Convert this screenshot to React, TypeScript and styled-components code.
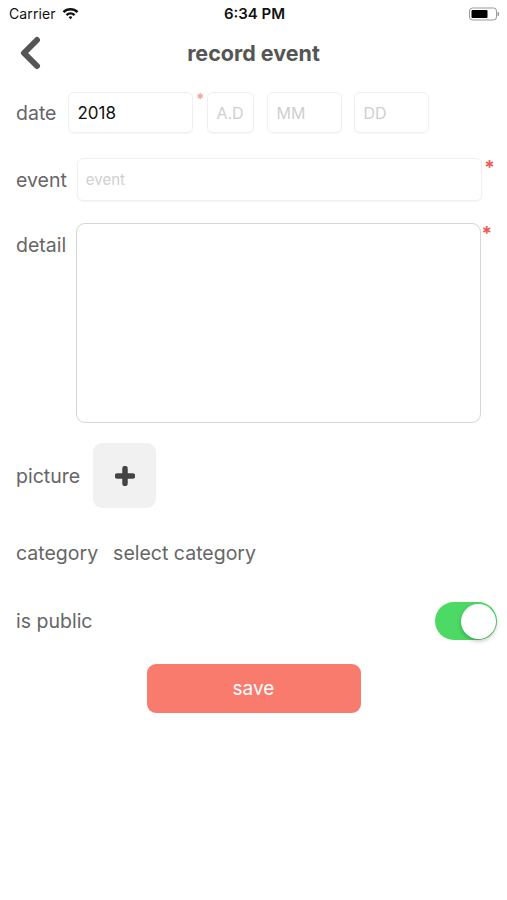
import React from "react";
import styled, { createGlobalStyle } from "styled-components";

const Global = createGlobalStyle`
  html, body { margin: 0; padding: 0; background: #fff; }
  body { font-family: Inter, "Noto Sans", "Liberation Sans", sans-serif; -webkit-font-smoothing: antialiased; }
  * { box-sizing: border-box; }
`;

const Page = styled.div`
  width: 507px;
  min-height: 900px;
  background: #fff;
  display: flex;
  flex-direction: column;
`;

const StatusBar = styled.div`
  height: 27px;
  display: grid;
  grid-template-columns: 1fr auto 1fr;
  align-items: center;
  padding: 0 7px 0 9px;
  font-size: 14px;
  color: #111;
`;

const StatusLeft = styled.div`
  display: flex;
  align-items: center;
  gap: 6px;
  letter-spacing: 0.1px;
`;

const StatusTime = styled.div`
  font-weight: 600;
  font-size: 15px;
`;

const StatusRight = styled.div`
  display: flex;
  justify-content: flex-end;
`;

const NavBar = styled.div`
  height: 52px;
  display: grid;
  grid-template-columns: 60px 1fr 60px;
  align-items: center;
`;

const BackButton = styled.div`
  padding-left: 17px;
  display: flex;
  align-items: center;
`;

const Title = styled.div`
  text-align: center;
  font-size: 21.5px;
  font-weight: 700;
  color: #555;
`;

const Form = styled.div`
  display: flex;
  flex-direction: column;
  padding: 13px 16px 0 16px;
`;

const Row = styled.div<{ $align?: string; $mt?: number }>`
  display: flex;
  align-items: ${(p) => p.$align || "center"};
  margin-top: ${(p) => p.$mt ?? 0}px;
`;

const Label = styled.div<{ $gap?: number; $pt?: number }>`
  font-size: 19.5px;
  color: #666;
  margin-right: ${(p) => p.$gap ?? 10}px;
  padding-top: ${(p) => p.$pt ?? 0}px;
  white-space: nowrap;
`;

const Field = styled.div<{ $mr?: number }>`
  position: relative;
  margin-right: ${(p) => p.$mr ?? 0}px;
`;

const Box = styled.div<{ $w: number; $h?: number; $ph?: boolean; $size?: number; $mr?: number }>`
  width: ${(p) => p.$w}px;
  height: ${(p) => p.$h ?? 41}px;
  margin-right: ${(p) => p.$mr ?? 0}px;
  border: 1px solid #efefef;
  border-radius: 6px;
  box-shadow: 0 1px 2px rgba(0, 0, 0, 0.04);
  display: flex;
  align-items: center;
  padding-left: 8px;
  font-size: ${(p) => p.$size ?? 16}px;
  color: ${(p) => (p.$ph ? "#cfcfcf" : "#111")};
`;

const TextArea = styled.div`
  width: 405px;
  height: 200px;
  border: 1.5px solid #d6d6d6;
  border-radius: 9px;
`;

const Star = styled.span<{ $light?: boolean; $top: number; $right: number }>`
  position: absolute;
  top: ${(p) => p.$top}px;
  right: ${(p) => p.$right}px;
  color: ${(p) => (p.$light ? "#f4a3a3" : "#ec5b55")};
  font-size: ${(p) => (p.$light ? 15 : 19)}px;
  line-height: 1;
  font-weight: 700;
`;

const DateGroup = styled.div`
  display: flex;
  align-items: center;
  padding-left: 1px;
`;

const PicButton = styled.div`
  width: 63px;
  height: 65px;
  background: #f1f1f1;
  border-radius: 9px;
  display: flex;
  align-items: center;
  justify-content: center;
`;

const Value = styled.div`
  font-size: 19.5px;
  color: #666;
`;

const Spacer = styled.div`
  flex: 1;
`;

const Toggle = styled.div`
  width: 62px;
  height: 38px;
  border-radius: 19px;
  background: #4cd964;
  position: relative;
  margin-right: -6px;
`;

const Thumb = styled.div`
  position: absolute;
  right: 1px;
  top: 1.5px;
  width: 35px;
  height: 35px;
  border-radius: 50%;
  background: #fff;
  box-shadow: 0 2px 4px rgba(0, 0, 0, 0.25);
`;

const SaveRow = styled.div`
  display: flex;
  justify-content: center;
  margin-top: 24px;
`;

const SaveButton = styled.button`
  width: 214px;
  height: 49px;
  border: none;
  border-radius: 9px;
  background: #f97b6d;
  color: #fff;
  font-family: inherit;
  font-size: 19px;
`;

const Wifi = () => (
  <svg width="17" height="13" viewBox="0 0 17 13">
    <path d="M0.6 4.2 A11.5 11.5 0 0 1 16.4 4.2 L14.6 6 A9 9 0 0 0 2.4 6 Z" fill="#111" />
    <path d="M3.6 7.2 A7.2 7.2 0 0 1 13.4 7.2 L11.6 9 A4.6 4.6 0 0 0 5.4 9 Z" fill="#111" />
    <path d="M6.6 10.2 A2.8 2.8 0 0 1 10.4 10.2 L8.5 12.2 Z" fill="#111" />
  </svg>
);

const Battery = () => (
  <svg width="31" height="14" viewBox="0 0 31 14">
    <rect x="0.5" y="1" width="27" height="12" rx="3" fill="none" stroke="#999" strokeWidth="1" />
    <rect x="2.5" y="3" width="16" height="8" rx="1" fill="#000" />
    <rect x="28.5" y="5" width="1.6" height="4" rx="0.8" fill="#999" />
  </svg>
);

const Chevron = () => (
  <svg width="26" height="34" viewBox="0 0 26 34">
    <path d="M20 4 L7 17 L20 30" fill="none" stroke="#555" strokeWidth="6" strokeLinecap="round" strokeLinejoin="round" />
  </svg>
);

const Plus = () => (
  <svg width="20" height="20" viewBox="0 0 20 20">
    <path d="M10 2.5 V17.5 M2.5 10 H17.5" stroke="#444" strokeWidth="5.5" strokeLinecap="round" />
  </svg>
);

export default function App() {
  return (
    <Page>
      <Global />
      <StatusBar>
        <StatusLeft>
          <span>Carrier</span>
          <Wifi />
        </StatusLeft>
        <StatusTime>6:34 PM</StatusTime>
        <StatusRight>
          <Battery />
        </StatusRight>
      </StatusBar>
      <NavBar>
        <BackButton>
          <Chevron />
        </BackButton>
        <Title>record event</Title>
        <div />
      </NavBar>
      <Form>
        <Row>
          <Label $gap={11}>date</Label>
          <DateGroup>
            <Field $mr={14}>
              <Box $w={125} $size={17}>2018</Box>
              <Star $light $top={-1} $right={-11}>*</Star>
            </Field>
            <Box $w={47} $ph $mr={13}>A.D</Box>
            <Box $w={75} $ph $mr={12}>MM</Box>
            <Box $w={75} $ph>DD</Box>
          </DateGroup>
        </Row>
        <Row $mt={25}>
          <Label>event</Label>
          <Field>
            <Box $w={405} $h={43} $ph $size={15}>event</Box>
            <Star $top={0} $right={-13}>*</Star>
          </Field>
        </Row>
        <Row $align="flex-start" $mt={22}>
          <Label $pt={10}>detail</Label>
          <Field>
            <TextArea />
            <Star $top={1} $right={-11}>*</Star>
          </Field>
        </Row>
        <Row $mt={20}>
          <Label $gap={13}>picture</Label>
          <PicButton>
            <Plus />
          </PicButton>
        </Row>
        <Row $mt={33}>
          <Label $gap={15}>category</Label>
          <Value>select category</Value>
        </Row>
        <Row $mt={37}>
          <Label>is public</Label>
          <Spacer />
          <Toggle>
            <Thumb />
          </Toggle>
        </Row>
        <SaveRow>
          <SaveButton>save</SaveButton>
        </SaveRow>
      </Form>
    </Page>
  );
}
